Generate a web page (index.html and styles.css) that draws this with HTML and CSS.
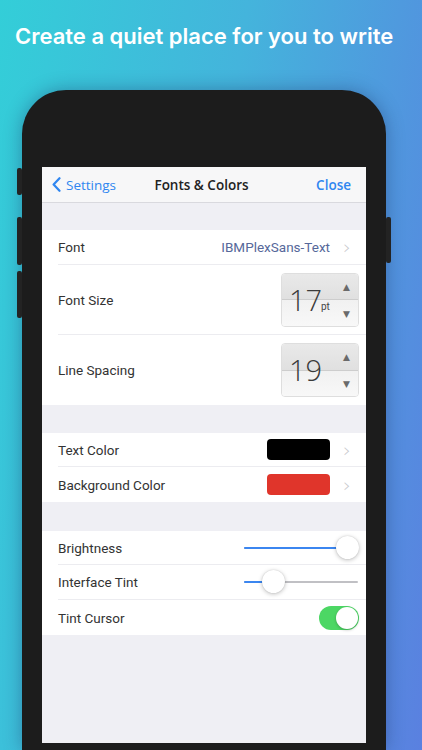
FILE: index.html
```html
<!DOCTYPE html>
<html>
<head>
<meta charset="utf-8">
<link rel="stylesheet" href="styles.css">
</head>
<body>
<div class="page">
  <h1 class="headline">Create a quiet place for you to write</h1>
  <div class="phone">
    <span class="btn btn-l1"></span>
    <span class="btn btn-l2"></span>
    <span class="btn btn-l3"></span>
    <span class="btn btn-r1"></span>
    <div class="screen">
      <div class="nav">
        <div class="nav-back">
          <svg class="back-chev" width="9" height="15" viewBox="0 0 9 15"><path d="M7.5 1.2 L1.6 7.5 L7.5 13.8" fill="none" stroke="#2f86f0" stroke-width="2.2" stroke-linecap="round" stroke-linejoin="round"/></svg>
          <span>Settings</span>
        </div>
        <div class="nav-title">Fonts &amp; Colors</div>
        <div class="nav-close">Close</div>
      </div>

      <div class="gap g1"></div>
      <div class="group">
        <div class="row h35">
          <span class="label">Font</span>
          <span class="value">IBMPlexSans-Text</span>
          <span class="chev">›</span>
        </div>
        <div class="row h70">
          <span class="label">Font Size</span>
          <div class="stepper">
            <div class="half top"></div>
            <div class="half bottom"></div>
            <span class="num">17</span><span class="unit">pt</span>
            <span class="arr up">▲</span><span class="arr down">▼</span>
          </div>
        </div>
        <div class="row h70 last">
          <span class="label">Line Spacing</span>
          <div class="stepper">
            <div class="half top"></div>
            <div class="half bottom"></div>
            <span class="num">19</span>
            <span class="arr up">▲</span><span class="arr down">▼</span>
          </div>
        </div>
      </div>

      <div class="gap g2"></div>
      <div class="group">
        <div class="row h34">
          <span class="label">Text Color</span>
          <span class="swatch black"></span>
          <span class="chev">›</span>
        </div>
        <div class="row h35 last">
          <span class="label">Background Color</span>
          <span class="swatch red"></span>
          <span class="chev">›</span>
        </div>
      </div>

      <div class="gap g3"></div>
      <div class="group">
        <div class="row h34">
          <span class="label">Brightness</span>
          <div class="slider">
            <div class="fill" style="width: 100%"></div>
            <div class="thumb" style="left: 103px"></div>
          </div>
        </div>
        <div class="row h35">
          <span class="label">Interface Tint</span>
          <div class="slider">
            <div class="fill" style="width: 20px"></div>
            <div class="thumb" style="left: 29px"></div>
          </div>
        </div>
        <div class="row h35 last">
          <span class="label">Tint Cursor</span>
          <div class="switch"><span class="knob"></span></div>
        </div>
      </div>
      <div class="rest"></div>
    </div>
  </div>
</div>
</body>
</html>
```

FILE: styles.css
```css
html, body {
  margin: 0;
  padding: 0;
}
body {
  width: 422px;
  height: 750px;
  overflow: hidden;
  background: linear-gradient(100deg, #33ced8 0%, #44b4dc 45%, #5a80e0 100%);
  font-family: Roboto, "Noto Sans", sans-serif;
}
.page {
  display: flex;
  flex-direction: column;
  height: 750px;
  overflow: hidden;
}
.headline {
  margin: 0;
  padding: 22px 0 0 15px;
  height: 28px;
  line-height: 28px;
  font-family: Inter, "Open Sans", sans-serif;
  font-weight: 600;
  font-size: 22px;
  color: #ffffff;
  white-space: nowrap;
}
.phone {
  position: relative;
  margin: 40px 0 0 22px;
  width: 364px;
  height: 660px;
  flex-shrink: 0;
  background: #1c1c1c;
  border-radius: 44px 44px 0 0;
  box-shadow: 0 0 18px rgba(20, 30, 80, 0.35);
}
.btn {
  position: absolute;
  width: 5px;
  background: #232323;
  border-radius: 2px;
}
.btn-l1 { left: -5px; top: 78px; height: 27px; }
.btn-l2 { left: -5px; top: 127px; height: 48px; }
.btn-l3 { left: -5px; top: 181px; height: 47px; }
.btn-r1 { right: -5px; top: 127px; height: 46px; }

.screen {
  margin: 77px 0 0 20px;
  width: 324px;
  height: 576px;
  background: #efeff4;
  display: flex;
  flex-direction: column;
  overflow: hidden;
}
.nav {
  height: 35px;
  flex-shrink: 0;
  background: #f7f7f8;
  border-bottom: 1px solid #d9d9de;
  display: flex;
  align-items: center;
  justify-content: space-between;
  padding: 0 15px 0 10px;
  font-family: "Open Sans", Roboto, sans-serif;
  font-size: 13.5px;
}
.nav-back {
  display: flex;
  align-items: center;
  gap: 5px;
  color: #2f86f0;
  width: 90px;
}
.nav-title {
  font-weight: 600;
  color: #222;
}
.nav-close {
  font-weight: 600;
  color: #2f86f0;
  width: 90px;
  text-align: right;
}
.gap { flex-shrink: 0; }
.g1 { height: 27px; }
.g2 { height: 28px; }
.g3 { height: 29px; }
.rest { flex: 1; }

.group {
  background: #fff;
  padding-left: 16px;
  flex-shrink: 0;
}
.row {
  display: flex;
  align-items: center;
  padding-right: 7px;
  border-bottom: 1px solid #ececf0;
  box-sizing: border-box;
}
.row.last { border-bottom: none; }
.h34 { height: 34px; }
.h35 { height: 35px; }
.h70 { height: 70px; }

.label {
  flex: 1;
  font-size: 13.5px;
  color: #333;
}
.value {
  font-size: 13.5px;
  color: #56689a;
}
.chev {
  width: 12px;
  margin: 0 6px 0 11px;
  text-align: center;
  font-size: 20px;
  line-height: 20px;
  color: #c8c8cc;
  font-family: "DejaVu Sans", sans-serif;
  font-weight: 300;
}

.stepper {
  position: relative;
  width: 78px;
  height: 54px;
  border-radius: 4px;
  border: 1px solid #dedede;
  box-sizing: border-box;
  overflow: hidden;
  display: flex;
  flex-direction: column;
}
.half { flex: 1; }
.half.top {
  background: linear-gradient(#e9e9e9, #e0e0e0);
  border-bottom: 1px solid #cdcdcd;
}
.half.bottom {
  background: linear-gradient(#f1f1f1, #f8f8f8);
}
.num {
  position: absolute;
  left: 7px;
  top: 9px;
  font-family: "Open Sans", Roboto, sans-serif;
  font-weight: 300;
  font-size: 29px;
  line-height: 34px;
  color: #3a3a3a;
}
.unit {
  position: absolute;
  left: 39px;
  top: 27px;
  font-size: 10px;
  color: #444;
}
.arr {
  position: absolute;
  right: 8px;
  font-size: 9px;
  color: #6a6a6a;
  font-family: "DejaVu Sans", sans-serif;
}
.arr.up { top: 8px; }
.arr.down { top: 35px; }

.swatch {
  width: 63px;
  height: 21px;
  border-radius: 4px;
}
.swatch.black { background: #000; }
.swatch.red { background: #e0352b; }

.slider {
  position: relative;
  width: 114px;
  height: 2px;
  background: #c0c0c4;
  margin-right: 1px;
  border-radius: 1px;
}
.fill {
  height: 2px;
  background: #3b86f0;
  border-radius: 1px;
}
.thumb {
  position: absolute;
  top: -11px;
  width: 23px;
  height: 23px;
  margin-left: -11.5px;
  border-radius: 50%;
  background: #fff;
  box-shadow: 0 1px 4px rgba(0, 0, 0, 0.25), 0 0 1px rgba(0, 0, 0, 0.2);
}

.switch {
  position: relative;
  width: 40px;
  height: 24px;
  border-radius: 12px;
  background: #4cd764;
  display: flex;
  justify-content: flex-end;
  align-items: center;
  padding: 1px;
  box-sizing: border-box;
}
.knob {
  width: 22px;
  height: 22px;
  border-radius: 50%;
  background: #fff;
  box-shadow: 0 1px 3px rgba(0, 0, 0, 0.25);
}
```
